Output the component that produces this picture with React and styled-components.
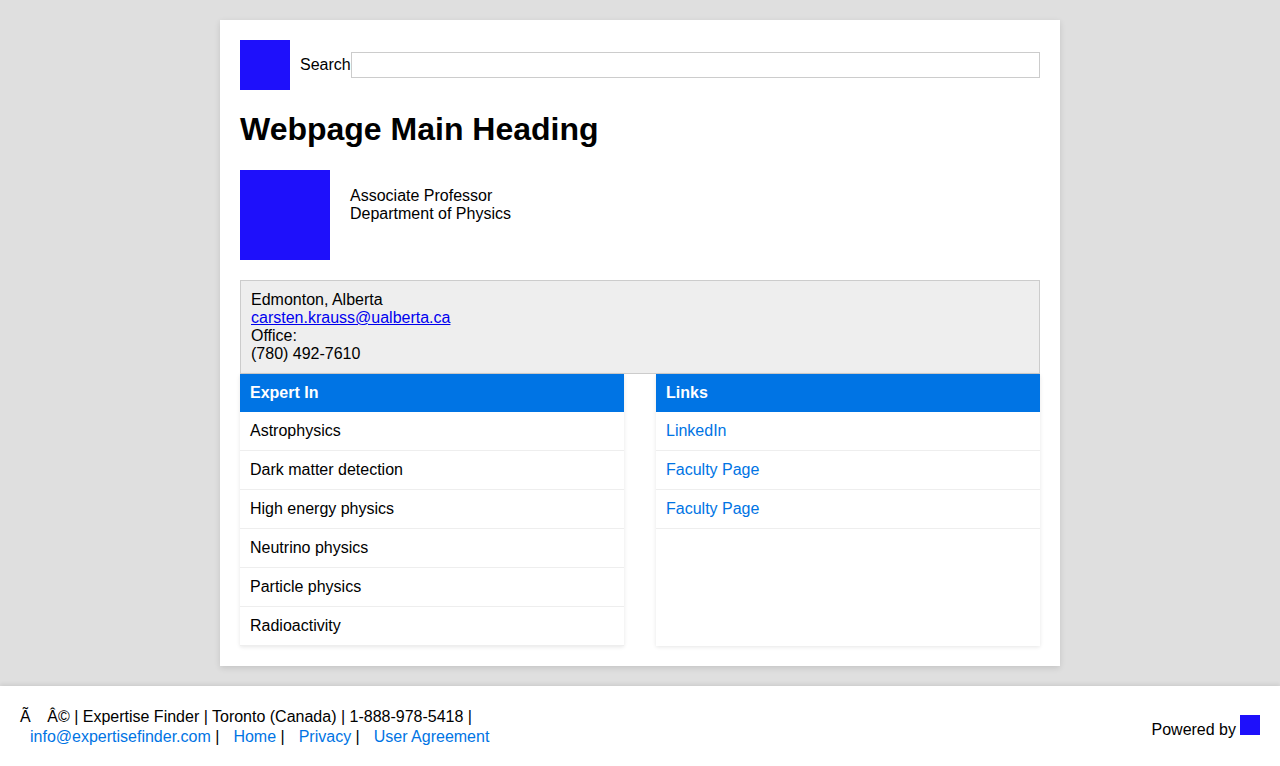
import React from "react";
import styled, { createGlobalStyle } from "styled-components";

const GlobalStyle = createGlobalStyle`
  html, body {
    margin: 0;
    padding: 0;
    background: #dfdfdf;
    font-family: "Liberation Sans", Arial, sans-serif;
    font-size: 16px;
    color: #000;
  }
`;

const Page = styled.div`
  min-height: 766px;
  display: flex;
  flex-direction: column;
`;

const Card = styled.main`
  width: 800px;
  margin: 20px auto;
  padding: 20px;
  background: #fff;
  box-shadow: 0 2px 6px rgba(0, 0, 0, 0.12);
`;

const TopBar = styled.header`
  display: flex;
  align-items: center;
  height: 50px;
`;

const Square = styled.div`
  width: ${(p) => p.size}px;
  height: ${(p) => p.size}px;
  background: #1e10fb;
  flex-shrink: 0;
`;

const SearchLabel = styled.label`
  margin-left: 10px;
  line-height: 18px;
`;

const SearchInput = styled.input`
  flex: 1;
  height: 26px;
  box-sizing: border-box;
  border: 1px solid #ccc;
  margin: 0;
  padding: 0 4px;
  font: inherit;
  outline: none;
`;

const Heading = styled.h1`
  font-size: 32px;
  font-weight: bold;
  margin: 20px 0 22px;
  line-height: 38px;
`;

const Profile = styled.section`
  display: flex;
  gap: 20px;
  margin-bottom: 20px;
`;

const Titles = styled.div`
  padding-top: 17px;
  line-height: 18px;
`;

const InfoBox = styled.div`
  background: #eee;
  border: 1px solid #ccc;
  padding: 10px;
  line-height: 18px;
  a {
    color: #0000ee;
  }
`;

const Columns = styled.div`
  display: grid;
  grid-template-columns: 1fr 1fr;
  column-gap: 32px;
`;

const Panel = styled.div`
  background: #fff;
  box-shadow: 0 1px 4px rgba(0, 0, 0, 0.1);
`;

const PanelHead = styled.div`
  background: #0074e4;
  color: #fff;
  font-weight: bold;
  padding: 10px;
  line-height: 18px;
`;

const Item = styled.div`
  padding: 10px;
  line-height: 18px;
  border-bottom: 1px solid #eee;
  color: ${(p) => (p.link ? "#0074e4" : "#000")};
`;

const Footer = styled.footer`
  margin-top: auto;
  background: #fff;
  box-shadow: 0 -2px 4px rgba(0, 0, 0, 0.08);
  padding: 21px 20px 19px;
  display: flex;
  align-items: center;
  justify-content: space-between;
`;

const FootText = styled.div`
  line-height: 20px;
`;

const FootLink = styled.a`
  color: #0074e4;
  text-decoration: none;
  margin-left: ${(p) => (p.first ? 10 : 14)}px;
`;

const Powered = styled.div`
  line-height: 20px;
`;

const Badge = styled.span`
  display: inline-block;
  width: 20px;
  height: 20px;
  margin-left: 4px;
  background: #1e10fb;
  vertical-align: baseline;
`;

const expertise = [
  "Astrophysics",
  "Dark matter detection",
  "High energy physics",
  "Neutrino physics",
  "Particle physics",
  "Radioactivity",
];

const links = ["LinkedIn", "Faculty Page", "Faculty Page"];

export default function App() {
  return (
    <Page>
      <GlobalStyle />
      <Card>
        <TopBar>
          <Square size={50} />
          <SearchLabel>Search</SearchLabel>
          <SearchInput type="text" />
        </TopBar>
        <Heading>Webpage Main Heading</Heading>
        <Profile>
          <Square size={90} />
          <Titles>
            Associate Professor
            <br />
            Department of Physics
          </Titles>
        </Profile>
        <InfoBox>
          Edmonton, Alberta
          <br />
          <a href="#">carsten.krauss@ualberta.ca</a>
          <br />
          Office:
          <br />
          (780) 492-7610
        </InfoBox>
        <Columns>
          <Panel>
            <PanelHead>Expert In</PanelHead>
            {expertise.map((e) => (
              <Item key={e}>{e}</Item>
            ))}
          </Panel>
          <Panel>
            <PanelHead>Links</PanelHead>
            {links.map((l, i) => (
              <Item key={i} link>
                {l}
              </Item>
            ))}
          </Panel>
        </Columns>
      </Card>
      <Footer>
        <FootText>
          Ã{"\u00a0\u00a0\u00a0\u2009"}Â© | Expertise Finder | Toronto (Canada) | 1-888-978-5418 |
          <br />
          <FootLink href="#" first>info@expertisefinder.com</FootLink> |
          <FootLink href="#">Home</FootLink> |
          <FootLink href="#">Privacy</FootLink> |
          <FootLink href="#">User Agreement</FootLink>
        </FootText>
        <Powered>
          Powered by<Badge />
        </Powered>
      </Footer>
    </Page>
  );
}
